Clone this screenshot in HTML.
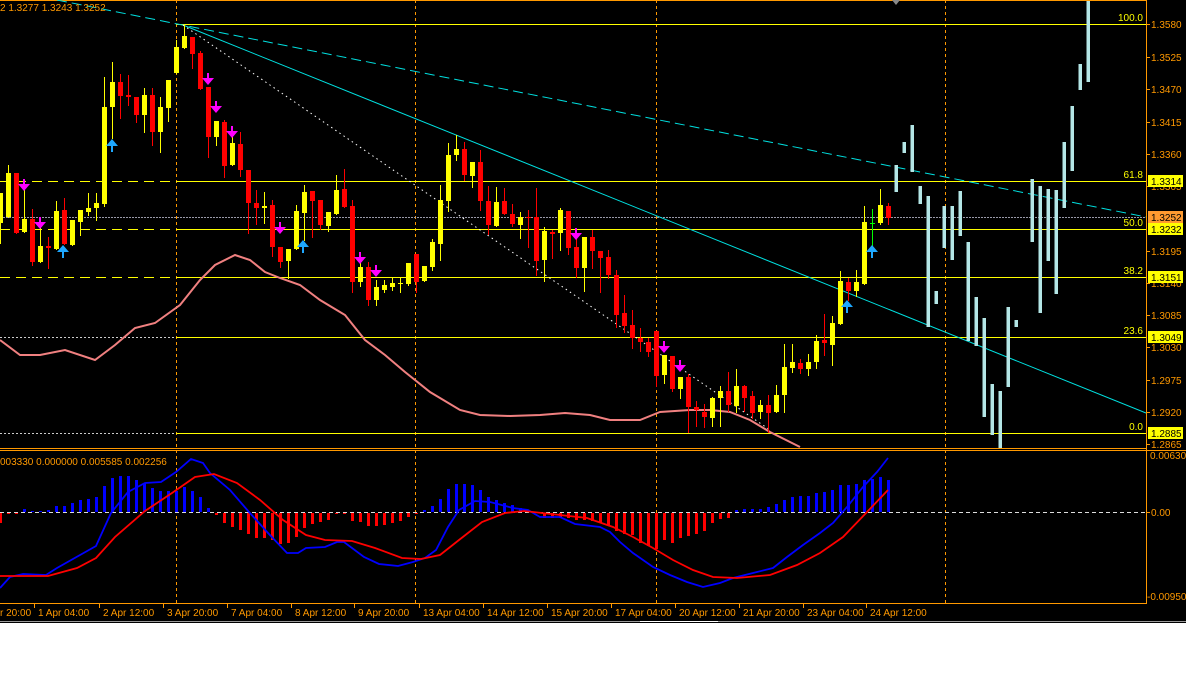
<!DOCTYPE html>
<html><head><meta charset="utf-8"><style>
html,body{margin:0;padding:0;background:#fff;}
#w{position:relative;width:1186px;height:691px;overflow:hidden;background:#fff;}
svg{position:absolute;left:0;top:0;}
text{font-family:"Liberation Sans",sans-serif;font-size:10px;}
</style></head><body><div id="w"><svg id="s" width="1186" height="691" xmlns="http://www.w3.org/2000/svg">
<rect x="0" y="0" width="1186" height="621" fill="#000"/>
<line x1="0" y1="621.5" x2="640" y2="621.5" stroke="#999"/>
<line x1="718" y1="621.5" x2="1186" y2="621.5" stroke="#999"/>
<line x1="0" y1="622.5" x2="1186" y2="622.5" stroke="#000"/>
<line x1="0" y1="0.5" x2="1146" y2="0.5" stroke="#ff9900"/>
<g id="g"></g>
</svg></div>
<script>
var o='';
function L(x1,y1,x2,y2,c,w,d){o+='<line x1="'+x1+'" y1="'+y1+'" x2="'+x2+'" y2="'+y2+'" stroke="'+c+'" stroke-width="'+(w||1)+'"'+(d?' stroke-dasharray="'+d+'"':'')+'/>';}
function R(x,y,w,h,c){o+='<rect x="'+x+'" y="'+y+'" width="'+w+'" height="'+Math.max(h,1)+'" fill="'+c+'"/>';}
function P(pts,c,w,d){o+='<polyline fill="none" stroke="'+c+'" stroke-width="'+w+'" points="'+pts+'"'+(d?' stroke-dasharray="'+d+'"':'')+'/>';}
function T(x,y,s,c,a){o+='<text x="'+x+'" y="'+y+'" fill="'+c+'"'+(a?' text-anchor="'+a+'"':'')+'>'+s+'</text>';}
var OR='#ff9900',Y='#ffff00';
[176,415,656,945].forEach(function(x){L(x+.5,0,x+.5,604,OR,1,'3,3');});
[[24,'100.0'],[181,'61.8'],[229,'50.0'],[277,'38.2'],[337,'23.6'],[433,'0.0']].forEach(function(f){
 L(176,f[0]+.5,1146,f[0]+.5,Y,1);T(1143,f[0]-3,f[1],Y,'end');});
[181,229,277].forEach(function(y){L(0,y+.5,176,y+.5,Y,1,'10,6');});
[337,433].forEach(function(y){L(0,y+.5,176,y+.5,'#ccc',1,'2,2');});
L(0,217.5,1146,217.5,'#9a9aa8',1,'2,1');
P('0,340 20,355 40,355 65,350 95,360 115,345 135,328 155,323 180,305 200,280 215,265 235,255 250,260 265,272 280,278 300,285 320,300 345,315 365,340 385,355 405,372 430,392 460,410 480,415 510,416 540,415 565,413 590,415 610,420 640,420 660,412 690,410 710,410 730,412 750,420 770,432 800,447','#f08080',2);
L(57,0,1146,217,'#00e0e0',1,'10,5');
L(183,25,1146,413,'#00e0e0',1);
L(183,25,770,430,'#ffffff',1,'1.5,3.5');
[[896,165,192],[904,142,153],[912,125,172],[920,186,204],[928,196,327],[936,291,304],[944,206,248],[952,206,260],[960,191,236],[968,242,341],[976,297,346],[984,318,417],[992,384,435],[1000,391,448],[1008,307,387],[1016,320,327],[1032,179,242],[1040,186,313],[1048,189,261],[1056,190,294],[1064,142,208],[1072,106,171],[1080,64,90],[1088,1,82]].forEach(function(b){R(b[0]-1.5,b[1],3.5,b[2]-b[1],'#b4e6e6');});
var C=[[193,223,193,243,1],[173,217,165,217,1],[173,233,173,233,0],[219,232,180,232,1],[219,262,209,265,0],[246,262,220,262,1],[246,248,237,268,0],[211,249,201,249,1],[210,244,198,244,0],[220,245,220,245,1],[210,222,210,235,1],[208,212,193,215,1],[203,208,193,220,1],[107,204,77,206,1],[82,107,62,138,1],[82,96,74,118,0],[95,97,75,105,0],[97,115,97,122,0],[95,115,88,132,1],[95,132,88,145,0],[107,132,97,152,1],[80,108,80,121,1],[47,73,40,73,1],[36,48,25,48,1],[37,54,37,68,0],[53,89,51,89,0],[87,137,87,157,0],[121,137,121,145,1],[122,166,120,177,0],[143,165,126,165,1],[144,170,132,176,0],[170,203,170,233,0],[203,208,190,224,0],[206,208,192,223,1],[205,247,200,256,0],[247,262,247,267,0],[249,261,249,278,1],[211,249,205,249,1],[192,213,185,240,1],[191,201,191,237,0],[200,225,200,229,0],[212,226,212,231,1],[190,214,175,214,1],[189,207,169,207,0],[206,282,200,292,0],[267,282,255,286,1],[267,300,262,305,0],[287,300,280,305,1],[285,290,280,292,1],[283,287,278,290,1],[283,284,278,292,1],[263,284,263,285,1],[254,282,254,292,0],[266,281,266,281,1],[242,267,239,270,1],[200,244,185,260,1],[155,201,143,211,1],[149,155,135,160,1],[149,175,142,180,0],[162,176,162,187,1],[162,201,150,210,0],[201,225,186,234,0],[202,226,187,226,1],[201,214,188,214,0],[214,224,204,226,0],[217,225,212,238,1],[217,218,210,247,0],[217,261,188,275,0],[231,260,227,281,1],[232,234,230,258,0],[210,233,208,250,1],[211,248,211,254,0],[247,268,230,277,0],[237,268,237,291,1],[237,251,230,268,0],[251,258,251,292,0],[257,275,250,278,0],[275,315,270,327,0],[313,326,295,332,0],[325,338,310,348,0],[338,342,328,351,0],[342,352,338,356,0],[331,376,331,386,0],[355,375,355,383,1],[356,389,356,391,0],[377,389,377,398,1],[377,407,374,432,0],[407,410,401,426,0],[412,417,404,427,0],[398,418,397,426,1],[391,398,386,426,1],[391,405,372,411,0],[386,406,369,412,1],[386,398,385,411,0],[396,413,391,418,0],[405,412,400,418,1],[405,413,395,432,0],[395,412,385,412,1],[367,395,344,412,1],[362,368,344,372,1],[363,369,359,373,0],[362,369,354,375,1],[341,362,335,368,1],[340,343,314,355,0],[323,345,316,365,1],[281,324,271,324,1],[282,291,278,300,0],[282,291,270,296,1],[222,284,206,284,1],[223,223,209,248,2],[205,223,189,224,1],[206,218,203,224,0]];
C.forEach(function(c,k){var x=8*k;var col=c[4]==1?Y:(c[4]==0?'#ff0000':'#00ff00');
 L(x+.5,c[2],x+.5,c[3]+1,col,1);R(x-2,c[0],5,c[1]-c[0],col);});
function AD(cx,ty){o+='<polygon fill="#ff00ff" points="'+(cx-1)+','+ty+' '+(cx+1)+','+ty+' '+(cx+1)+','+(ty+5)+' '+(cx+6)+','+(ty+5)+' '+cx+','+(ty+12)+' '+(cx-6)+','+(ty+5)+' '+(cx-1)+','+(ty+5)+'"/>';}
function AU(cx,by){o+='<polygon fill="#1ea8ff" points="'+(cx-1)+','+by+' '+(cx+1)+','+by+' '+(cx+1)+','+(by-6)+' '+(cx+6)+','+(by-6)+' '+cx+','+(by-13)+' '+(cx-6)+','+(by-6)+' '+(cx-1)+','+(by-6)+'"/>';}
[[24,179],[40,217],[208,73],[216,101],[232,126],[280,222],[360,252],[376,265],[576,228],[664,341],[680,360]].forEach(function(a){AD(a[0],a[1]);});
[[112,152],[63,258],[303,253],[847,313],[872,258]].forEach(function(a){AU(a[0],a[1]);});
T(0,11,'2 1.3277 1.3243 1.3252',OR);
o+='<polygon points="892,0 900,0 896,5" fill="#888"/>';
L(1146.5,0,1146.5,604,OR,1);
[[24,'1.3580'],[57,'1.3525'],[89,'1.3470'],[122,'1.3415'],[154,'1.3360'],[186,'1.3305'],[251,'1.3195'],[283,'1.3140'],[315,'1.3085'],[347,'1.3030'],[380,'1.2975'],[412,'1.2920'],[444,'1.2865']].forEach(function(p){L(1146,p[0]+.5,1150,p[0]+.5,OR,1);T(1151,p[0]+4,p[1],OR);});
[[181,'1.3314',Y],[217,'1.3252','#ff9a30'],[229,'1.3232',Y],[277,'1.3151',Y],[337,'1.3049',Y],[433,'1.2885',Y]].forEach(function(p){R(1148,p[0]-6,35,12,p[2]);T(1151,p[0]+4,p[1],'#000');});
L(0,448.5,1146,448.5,OR,1);L(0,450.5,1186,450.5,OR,1);
L(0,512.5,1146,512.5,'#ddd',1,'4,3');
L(1146,512.5,1150,512.5,OR,1);
T(1150,459,'0.006304',OR);T(1151,516,'0.00',OR);T(1147,600,'-0.00950',OR);
T(0,465,'003330 0.000000 0.005585 0.002256',OR);
var H=[[0,522],[8,513],[16,513],[24,509],[32,511],[40,511],[48,510],[56,506],[64,506],[72,503],[80,500],[88,499],[96,497],[104,486],[112,478],[120,476],[128,476],[136,480],[144,483],[152,488],[160,491],[168,491],[176,491],[184,487],[192,491],[200,497],[208,508],[216,514],[224,522],[232,526],[240,529],[248,533],[256,537],[264,537],[272,539],[280,543],[288,542],[296,536],[304,527],[312,523],[320,521],[328,519],[336,513],[344,513],[352,520],[360,521],[368,525],[376,525],[384,524],[392,522],[400,520],[408,516],[416,513],[424,510],[432,506],[440,499],[448,489],[456,484],[464,484],[472,485],[480,490],[488,497],[496,500],[504,503],[512,505],[520,508],[528,510],[536,512],[544,517],[552,517],[560,517],[568,517],[576,519],[584,519],[592,520],[600,522],[608,525],[616,530],[624,533],[632,534],[640,542],[648,545],[656,548],[664,539],[672,542],[680,537],[688,535],[696,533],[704,530],[712,522],[720,518],[728,517],[736,510],[744,509],[752,509],[760,509],[768,507],[776,504],[784,500],[792,497],[800,496],[808,496],[816,493],[824,492],[832,490],[840,485],[848,485],[856,484],[864,480],[872,479],[880,477],[888,480]];
H.forEach(function(h){var z=512;if(h[1]<z)R(h[0]-1,h[1],3,z-h[1],'#0000ff');else if(h[1]>z)R(h[0]-1,z+1,3,h[1]-z,'#ff0000');});
P('0,588 10,577 23,574 46,575 57,568 96,546 111,513 128,492 145,483 161,482 176,472 191,459 203,463 210,473 230,490 249,512 268,533 287,553 298,553 306,548 325,547 337,542 344,542 364,557 379,564 398,566 413,562 425,558 436,550 448,527 459,510 475,501 490,502 513,508 528,510 540,517 560,517 575,524 600,527 610,532 620,542 633,553 653,567 670,575 687,582 703,587 720,583 733,578 753,573 773,568 787,557 803,545 820,533 833,523 847,507 863,487 877,472 888,458','#0000ff',1.8);
P('0,576 48,576 77,568 96,558 115,537 145,511 172,493 195,477 214,474 237,483 260,500 283,520 306,535 325,540 352,541 375,548 402,558 421,559 440,555 459,540 482,522 505,513 524,511 551,514 587,518 613,527 633,537 653,548 673,560 693,570 713,577 737,578 770,575 797,565 820,553 843,537 867,512 888,490','#ff0000',1.8);
L(0,603.5,1146,603.5,OR,1);
var TL=[[0,'r 20:00'],[38,'1 Apr 04:00'],[103,'2 Apr 12:00'],[167,'3 Apr 20:00'],[231,'7 Apr 04:00'],[295,'8 Apr 12:00'],[358,'9 Apr 20:00'],[423,'13 Apr 04:00'],[487,'14 Apr 12:00'],[551,'15 Apr 20:00'],[615,'17 Apr 04:00'],[679,'20 Apr 12:00'],[743,'21 Apr 20:00'],[807,'23 Apr 04:00'],[870,'24 Apr 12:00']];
TL.forEach(function(t){if(t[0]>0)L(t[0]-3.5,604,t[0]-3.5,608,OR,1);T(t[0],616,t[1],OR);});
document.getElementById('g').innerHTML=o;
</script></body></html>
